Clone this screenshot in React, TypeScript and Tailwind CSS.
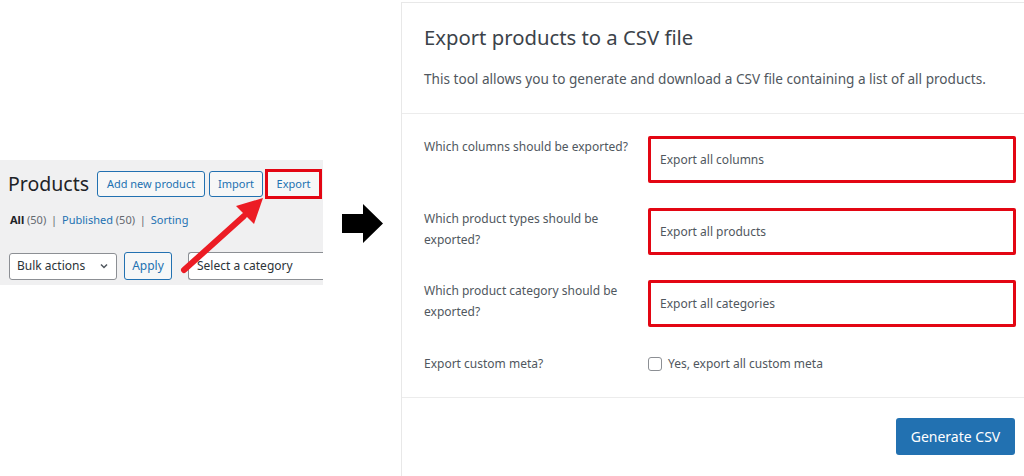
import React from "react";

const font = { fontFamily: '"Noto Sans", "Open Sans", Arial, sans-serif' };

function Row({ label, value }: { label: React.ReactNode; value: string }) {
  return (
    <div className="flex">
      <div className="w-[246px] shrink-0 pl-[22px] text-[12px] leading-[21px] text-[#50575e]">{label}</div>
      <div className="w-[368px] shrink-0 h-[47px] border-[3px] border-[#e30613] rounded-[2px] flex items-center pl-[9px] text-[12px] text-[#50575e]">
        {value}
      </div>
    </div>
  );
}

export default function App() {
  return (
    <div className="w-[1024px] h-[476px] bg-white flex overflow-hidden" style={font}>
      {/* Left: screenshot of products list */}
      <div className="w-[323px] shrink-0 pt-[160px]">
        <div className="relative h-[125px] bg-[#f0f0f1]">
          <div className="flex items-center h-[30px] pt-[9px] box-content">
            <div className="ml-[8px] text-[19.5px] leading-none text-[#1d2327]">Products</div>
            <div className="ml-[8px] h-[26px] w-[108px] border border-[#2271b1] rounded-[3px] bg-[#f6f7f7] flex items-center justify-center text-[11px] text-[#2271b1]">
              Add new product
            </div>
            <div className="ml-[4px] h-[26px] w-[54px] border border-[#2271b1] rounded-[3px] bg-[#f6f7f7] flex items-center justify-center text-[11px] text-[#2271b1]">
              Import
            </div>
            <div className="ml-[2px] h-[30px] w-[57px] border-[3px] border-[#e30613] bg-[#f6f7f7] flex items-center justify-center text-[11px] text-[#2271b1]">
              Export
            </div>
          </div>
          <div className="mt-[13px] ml-[10px] text-[11px] leading-[16px] text-[#646970]">
            <span className="font-bold text-[#1d2327]">All</span> (50) <span className="mx-[2px]">|</span>{" "}
            <span className="text-[#2271b1]">Published</span> (50) <span className="mx-[2px]">|</span>{" "}
            <span className="text-[#2271b1]">Sorting</span>
          </div>
          <div className="flex items-center mt-[24px]">
            <div className="ml-[9px] h-[27px] w-[108px] border border-[#8c8f94] rounded-[3px] bg-white flex items-center justify-between pl-[7px] pr-[7px] text-[12px] text-[#2c3338]">
              <span>Bulk actions</span>
              <svg width="10" height="10" viewBox="0 0 10 10" fill="none" stroke="#50575e" strokeWidth="1.5">
                <path d="M2 3.5 L5 6.5 L8 3.5" />
              </svg>
            </div>
            <div className="ml-[7px] h-[28px] w-[48px] border border-[#2271b1] rounded-[3px] bg-[#f6f7f7] flex items-center justify-center text-[12px] text-[#2271b1]">
              Apply
            </div>
            <div className="ml-[16px] h-[28px] flex-1 border border-[#8c8f94] border-r-0 rounded-l-[3px] bg-white flex items-center pl-[8px] text-[12px] text-[#2c3338]">
              Select a category
            </div>
          </div>
          <svg className="absolute left-0 top-0" width="323" height="125" viewBox="0 0 323 125">
            <line x1="184" y1="110" x2="244" y2="56" stroke="#ec1c24" strokeWidth="6" strokeLinecap="round" />
            <polygon points="263,38 236,46 254,64" fill="#ec1c24" />
          </svg>
        </div>
      </div>

      {/* Middle arrow */}
      <div className="w-[78px] shrink-0 pt-[204px] pl-[19px]">
        <svg width="41" height="39" viewBox="0 0 41 39">
          <polygon points="0,10 21,10 21,0 41,19.5 21,39 21,29 0,29" fill="#000" />
        </svg>
      </div>

      {/* Right panel */}
      <div className="flex-1 min-w-0 mt-[2px] border-l border-t border-[#e8e8e8] text-[#3c434a]">
        <div className="pl-[22px] pt-[20px] pb-[24px] border-b border-[#ececec]">
          <div className="text-[20.3px] leading-[28px] text-[#3c434a]">Export products to a CSV file</div>
          <div className="mt-[18px] text-[13.6px] leading-[20px] text-[#50575e] whitespace-nowrap">
            This tool allows you to generate and download a CSV file containing a list of all products.
          </div>
        </div>
        <div className="pt-[22px] pb-[24px] border-b border-[#ececec] flex flex-col gap-[25px]">
          <Row label="Which columns should be exported?" value="Export all columns" />
          <Row label={<>Which product types should be<br />exported?</>} value="Export all products" />
          <Row label={<>Which product category should be<br />exported?</>} value="Export all categories" />
          <div className="flex items-center pt-[3px]">
            <div className="w-[246px] shrink-0 pl-[22px] text-[12px] text-[#50575e]">Export custom meta?</div>
            <div className="w-[14px] h-[14px] border border-[#8c8f94] rounded-[3px] bg-white" />
            <div className="ml-[6px] text-[12px] text-[#50575e]">Yes, export all custom meta</div>
          </div>
        </div>
        <div className="flex pl-[494px] pt-[20px]">
          <div className="h-[37px] w-[119px] rounded-[3px] bg-[#2271b1] text-white text-[14px] flex items-center justify-center">
            Generate CSV
          </div>
        </div>
      </div>
    </div>
  );
}
